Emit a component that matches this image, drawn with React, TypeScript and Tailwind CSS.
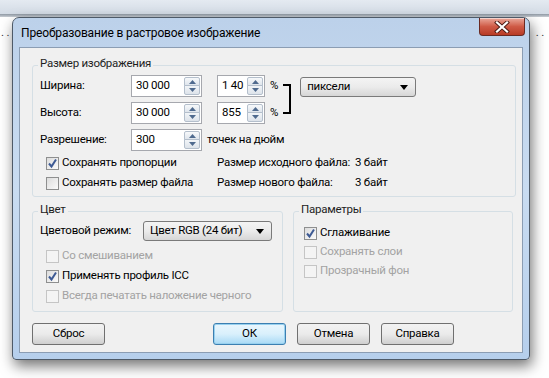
import type { ReactNode } from 'react';

// Win7 style "raster conversion" dialog

function SpinArrows() {
  return (
    <div className="flex h-[18px] w-[16px] flex-col">
      <div className="flex h-[9px] items-center justify-center rounded-t-[2px] border border-[#b4bfcc] bg-gradient-to-b from-[#f7f9fb] to-[#dfe5ec]">
        <svg width="7" height="4" viewBox="0 0 7 4">
          <path d="M0 4 L3.5 0 L7 4 Z" fill="#4f6a8e" />
        </svg>
      </div>
      <div className="-mt-px flex h-[10px] items-center justify-center rounded-b-[2px] border border-[#b4bfcc] bg-gradient-to-b from-[#f2f5f8] to-[#dde3ea]">
        <svg width="7" height="4" viewBox="0 0 7 4">
          <path d="M0 0 L3.5 4 L7 0 Z" fill="#4f6a8e" />
        </svg>
      </div>
    </div>
  );
}

function SpinBox({ value, width }: { value: string; width: string }) {
  return (
    <div className={`flex h-[22px] items-center border border-[#a6a8ae] bg-white pr-[1px] ${width}`}>
      <span className="flex-1 whitespace-nowrap pl-[4px] text-black">{value}</span>
      <SpinArrows />
    </div>
  );
}

function CheckBox({ checked = false, disabled = false, label }: { checked?: boolean; disabled?: boolean; label: string }) {
  return (
    <div className="flex h-[20px] items-center">
      <div
        className={`flex h-[13px] w-[13px] shrink-0 items-center justify-center border ${
          disabled ? 'border-[#c5c5c5] bg-[#f4f4f4]' : 'border-[#8e8f8f] bg-gradient-to-br from-[#dcdcdc] to-[#fbfbfb]'
        }`}
      >
        {checked && (
          <svg width="11" height="11" viewBox="0 0 11 11">
            <path d="M2 5.5 L4.5 8.5 L9 1.5" fill="none" stroke="#3d5a94" strokeWidth="2" />
          </svg>
        )}
      </div>
      <span className={`ml-[3px] whitespace-nowrap ${disabled ? 'text-[#a3a3a3]' : 'text-black'}`}>{label}</span>
    </div>
  );
}

function Combo({ value, width }: { value: string; width: string }) {
  return (
    <div className={`flex h-[20px] items-center rounded-[3px] border border-[#7a7a7a] bg-gradient-to-b from-[#f4f4f4] via-[#ebebeb] to-[#d6d6d6] pl-[6px] pr-[7px] ${width}`}>
      <span className="flex-1 whitespace-nowrap text-black">{value}</span>
      <svg width="8" height="5" viewBox="0 0 8 5">
        <path d="M0 0 L8 0 L4 5 Z" fill="#000" />
      </svg>
    </div>
  );
}

function Group({ title, className, children }: { title: string; className: string; children: ReactNode }) {
  return (
    <div className={`relative rounded-[3px] border border-[#d5dfe5] ${className}`}>
      <span className="absolute -top-[8px] left-[5px] whitespace-nowrap bg-[#f0f0f0] px-[2px] text-[#1e1e1e]">{title}</span>
      {children}
    </div>
  );
}

function Button({ label, primary = false }: { label: string; primary?: boolean }) {
  return (
    <div
      className={`flex h-[22px] w-[73px] items-center justify-center rounded-[3px] border ${
        primary
          ? 'border-[#3c7fb1] bg-gradient-to-b from-[#eaf6fd] via-[#d9f0fc] to-[#a7d9f5] shadow-[inset_0_0_0_1px_#98d1ef]'
          : 'border-[#707070] bg-gradient-to-b from-[#f2f2f2] via-[#ebebeb] to-[#cfcfcf]'
      } text-black`}
    >
      {label}
    </div>
  );
}

export default function App() {
  return (
    <div className="relative h-[378px] w-[549px] overflow-hidden bg-white font-['Roboto',sans-serif] text-[11.5px] leading-none tracking-[-0.25px]">
      {/* desktop behind the dialog */}
      <div className="h-[14px] bg-gradient-to-b from-[#e4eaf1] to-[#d3dbe5]" />
      <div className="h-[3px] bg-gradient-to-b from-[#8f99a4] to-[#c9ced4]" />
      <div className="mt-[10px] flex justify-between px-[1px] text-[#333]">
        <span>. . .</span>
        <span className="mr-[4px]">. .</span>
      </div>

      {/* dialog window */}
      <div className="absolute left-[12px] top-[17px] flex h-[343px] w-[518px] flex-col rounded-t-[7px] rounded-b-[4px] border border-[#4e5a68] bg-gradient-to-b from-[#bcd1ea] via-[#c9dcf1] to-[#b6cfec] shadow-[2px_6px_14px_rgba(0,0,0,0.55)]">
        <div className="flex h-[29px] items-start">
          <span className="ml-[8px] self-center whitespace-nowrap text-[12px] tracking-[-0.15px] text-black">Преобразование в растровое изображение</span>
          <div className="ml-auto mr-[4px] flex h-[18px] w-[46px] items-center justify-center rounded-b-[4px] border border-t-0 border-[#6b2a22] bg-gradient-to-b from-[#e9a89b] via-[#cf5a46] to-[#b83a24] shadow-[inset_0_1px_0_rgba(255,255,255,0.5)]">
            <svg width="16" height="12" viewBox="0 0 16 12">
              <path d="M3 1.5 L13 10.5 M13 1.5 L3 10.5" stroke="#4a1a14" strokeWidth="4" strokeLinecap="square" />
              <path d="M3 1.5 L13 10.5 M13 1.5 L3 10.5" stroke="#ffffff" strokeWidth="2.2" strokeLinecap="square" />
            </svg>
          </div>
        </div>

        {/* client area */}
        <div className="mx-[6px] flex h-[306px] flex-col border border-[#8b9db3] bg-[#f0f0f0]">
          <Group title="Размер изображения" className="ml-[12px] mt-[17px] h-[132px] w-[484px] pl-[7px] pt-[9px]">
            <div className="flex">
              <div className="flex flex-col gap-[5px]">
                <div className="flex h-[22px] items-center">
                  <span className="w-[91px]">Ширина:</span>
                  <SpinBox value="30 000" width="w-[71px]" />
                  <div className="ml-[15px]">
                    <SpinBox value="1 40" width="w-[48px]" />
                  </div>
                  <span className="ml-[5px]">%</span>
                </div>
                <div className="flex h-[22px] items-center">
                  <span className="w-[91px]">Высота:</span>
                  <SpinBox value="30 000" width="w-[71px]" />
                  <div className="ml-[15px]">
                    <SpinBox value="855" width="w-[48px]" />
                  </div>
                  <span className="ml-[5px]">%</span>
                </div>
              </div>
              <div className="ml-[5px] mt-[9px] h-[30px] w-[8px] border-y-[2px] border-r-[2px] border-black" />
              <div className="ml-[9px] mt-[2px]">
                <Combo value="пиксели" width="w-[116px]" />
              </div>
            </div>
            <div className="mt-[5px] flex h-[22px] items-center">
              <span className="w-[91px]">Разрешение:</span>
              <SpinBox value="300" width="w-[71px]" />
              <span className="ml-[5px] whitespace-nowrap">точек на дюйм</span>
            </div>
            <div className="mt-[2px] flex">
              <div className="ml-[6px] flex w-[171px] flex-col">
                <CheckBox checked label="Сохранять пропорции" />
                <CheckBox label="Сохранять размер файла" />
              </div>
              <div className="flex w-[138px] flex-col">
                <span className="flex h-[20px] items-center whitespace-nowrap">Размер исходного файла:</span>
                <span className="flex h-[20px] items-center whitespace-nowrap">Размер нового файла:</span>
              </div>
              <div className="flex flex-col">
                <span className="flex h-[20px] items-center whitespace-nowrap">3 байт</span>
                <span className="flex h-[20px] items-center whitespace-nowrap">3 байт</span>
              </div>
            </div>
          </Group>

          <div className="ml-[12px] mt-[14px] flex">
            <Group title="Цвет" className="h-[101px] w-[251px] pl-[7px] pt-[9px]">
              <div className="flex h-[20px] items-center">
                <span className="w-[103px] whitespace-nowrap">Цветовой режим:</span>
                <Combo value="Цвет RGB (24 бит)" width="w-[129px]" />
              </div>
              <div className="ml-[6px] mt-[5px] flex flex-col">
                <CheckBox disabled label="Со смешиванием" />
                <CheckBox checked label="Применять профиль ICC" />
                <CheckBox disabled label="Всегда печатать наложение черного" />
              </div>
            </Group>
            <Group title="Параметры" className="ml-[10px] h-[101px] w-[220px] pl-[10px] pt-[11px]">
              <div className="flex flex-col gap-0">
                <div className="-mb-px">
                  <CheckBox checked label="Сглаживание" />
                </div>
                <CheckBox disabled label="Сохранять слои" />
                <div className="-mt-px">
                  <CheckBox disabled label="Прозрачный фон" />
                </div>
              </div>
            </Group>
          </div>

          <div className="ml-[12px] mt-[11px] flex">
            <Button label="Сброс" />
            <div className="ml-[108px] flex gap-[11px]">
              <Button label="ОК" primary />
              <Button label="Отмена" />
              <Button label="Справка" />
            </div>
          </div>
        </div>
      </div>
    </div>
  );
}
